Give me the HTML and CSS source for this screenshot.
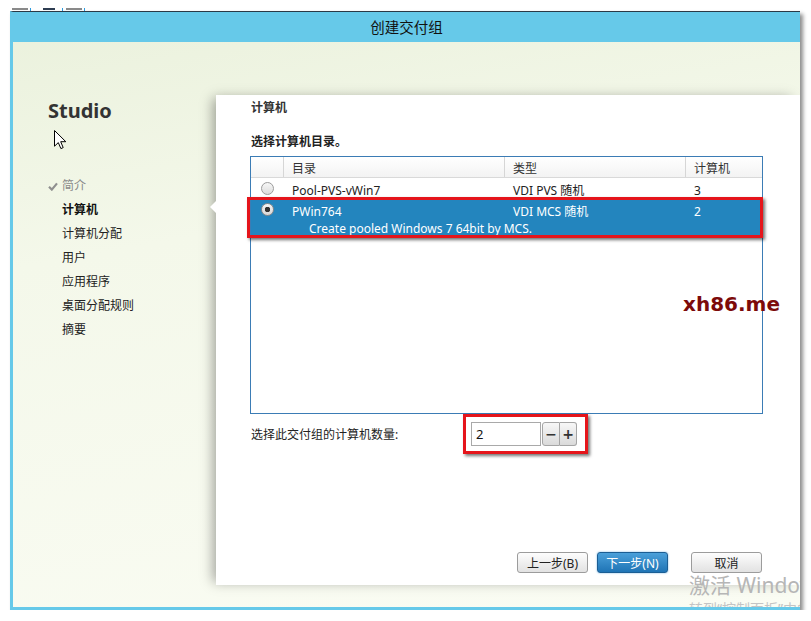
FILE: index.html
```html
<!DOCTYPE html>
<html lang="zh-CN">
<head>
    <meta charset="UTF-8">
    <title>创建交付组</title>
    <link rel="stylesheet" href="styles.css">
</head>
<body>
    <div class="peek">
        <span class="peek-bar"></span><span class="peek-tick"></span>
        <span class="peek-bar dark"></span><span class="peek-tick"></span>
        <span class="peek-bar"></span><span class="peek-tick"></span>
    </div>

    <div class="window">
        <div class="titlebar">创建交付组</div>

        <div class="wizard">
            <aside class="sidebar">
                <div class="brand">Studio</div>
                <svg class="pointer" width="13" height="20" viewBox="0 0 13 20">
                    <path d="M0.5 0.5 L0.5 16.2 L4.3 12.6 L6.9 18.6 L9.2 17.6 L6.7 11.7 L11.8 11.7 Z" fill="#fff" stroke="#000" stroke-width="1" stroke-linejoin="miter"/>
                </svg>
                <ul class="steps">
                    <li class="done">
                        <svg class="check" width="10" height="9" viewBox="0 0 10 9">
                            <path d="M1 4.8 L3.8 7.6 L9 1.4" fill="none" stroke="#8f8f8f" stroke-width="2.2"/>
                        </svg>简介
                    </li>
                    <li class="current">计算机</li>
                    <li>计算机分配</li>
                    <li>用户</li>
                    <li>应用程序</li>
                    <li>桌面分配规则</li>
                    <li>摘要</li>
                </ul>
            </aside>

            <main class="panel">
                <span class="notch"></span>
                <h2>计算机</h2>
                <p class="prompt">选择计算机目录。</p>

                <div class="catalog">
                    <div class="row catalog-head">
                        <div></div>
                        <div>目录</div>
                        <div>类型</div>
                        <div>计算机</div>
                    </div>
                    <div class="row">
                        <span class="radio"></span>
                        <div>Pool-PVS-vWin7</div>
                        <div>VDI PVS 随机</div>
                        <div>3</div>
                    </div>
                    <div class="row selected">
                        <span class="radio checked"></span>
                        <div>PWin764</div>
                        <div>VDI MCS 随机</div>
                        <div>2</div>
                        <div class="desc">Create pooled Windows 7 64bit by MCS.</div>
                    </div>
                    <div class="mark mark-row"></div>
                </div>

                <div class="count">
                    <label for="count">选择此交付组的计算机数量:</label>
                    <input type="text" id="count" value="2">
                    <div class="spin">
                        <button class="spin-btn">−</button>
                        <button class="spin-btn">+</button>
                    </div>
                    <div class="mark mark-count"></div>
                </div>

                <div class="actions">
                    <button class="btn">上一步(B)</button>
                    <button class="btn btn-primary">下一步(N)</button>
                    <button class="btn">取消</button>
                </div>
            </main>
        </div>

        <div class="brandmark">xh86.me</div>
        <div class="activate">激活 Windows<small>转到“控制面板”中的“系统”以激活 Windows。</small></div>
    </div>
</body>
</html>
```

FILE: styles.css
```css
body {
    margin: 0;
    background: #fff;
    font-family: "Noto Sans", "Noto Sans CJK SC", sans-serif;
    font-size: 12px;
    color: #222;
}

/* taskbar peek above the window */
.peek {
    height: 11px;
    display: flex;
    align-items: flex-end;
    padding-left: 12px;
}

.peek-bar {
    width: 16px;
    height: 2px;
    margin-bottom: 1px;
    background: #8a8a8a;
}

.peek-bar.dark {
    width: 12px;
    margin-left: 12px;
    background: #2e3d52;
}

.peek-tick {
    width: 1px;
    height: 3px;
    margin-left: 2px;
    background: #2a9be0;
}

.peek-bar.dark + .peek-tick {
    margin-left: 7px;
}

.peek-bar:nth-child(5) {
    margin-left: 3px;
}

.window {
    position: relative;
    margin-left: 10px;
    width: 787px;
    height: 595px;
    border-top: 1px solid #2b3a46;
    border-left: 3px solid #66c9e9;
    border-bottom: 3px solid #66c9e9;
    box-shadow: 3px 3px 4px rgba(0, 0, 0, 0.45);
    background: linear-gradient(170deg, #eaf1dc 0%, #f4f8ea 35%, #fafcf3 100%);
    overflow: hidden;
    display: flex;
    flex-direction: column;
}

.titlebar {
    height: 30px;
    line-height: 29px;
    background: #66c9e9;
    text-align: center;
    font-family: "Noto Sans CJK SC", sans-serif;
    font-size: 14.5px;
    color: #111;
}

.wizard {
    flex: 1;
    display: flex;
}

.sidebar {
    width: 203px;
    flex-shrink: 0;
    padding-left: 35px;
    box-sizing: border-box;
}

.brand {
    margin-top: 57px;
    font-size: 20px;
    font-weight: bold;
    line-height: 24px;
    color: #333;
}

.pointer {
    display: block;
    margin: 7px 0 0 6px;
}

.steps {
    list-style: none;
    margin: 24px 0 0;
    padding: 0 0 0 14px;
}

.steps li {
    height: 24px;
    line-height: 24px;
    color: #222;
}

.steps .done {
    color: #8a8a8a;
}

.steps .check {
    margin-left: -14px;
    margin-right: 4px;
    vertical-align: -1px;
}

.steps .current {
    font-weight: bold;
    color: #111;
}

.panel {
    flex: 1;
    position: relative;
    margin: 53px 0 22px;
    padding: 5px 37px 12px 34px;
    background: #fff;
    box-shadow: -6px 0 12px -3px rgba(0, 0, 0, 0.35);
    display: flex;
    flex-direction: column;
}

.notch {
    position: absolute;
    left: -6px;
    top: 106px;
    border-style: solid;
    border-width: 6px 6px 6px 0;
    border-color: transparent #fff transparent transparent;
}

.panel h2 {
    margin: 0;
    padding-left: 1px;
    font-size: 12px;
    line-height: 16px;
    font-weight: bold;
    color: #333;
}

.prompt {
    margin: 18px 0 6px;
    padding-left: 1px;
    line-height: 16px;
    font-weight: bold;
    color: #222;
}

.catalog {
    position: relative;
    height: 258px;
    box-sizing: border-box;
    border: 1px solid #3b7cb5;
    background: #fff;
}

.row {
    display: grid;
    grid-template-columns: 33px 221px 181px 1fr;
    height: 21px;
    align-items: center;
}

.row > div {
    padding: 4px 0 0 8px;
    line-height: 17px;
    white-space: nowrap;
}

.catalog-head {
    height: 20px;
    border-bottom: 1px solid #d9d9d9;
    background: linear-gradient(#fff, #f3f3f3);
    color: #333;
}

.catalog-head > div {
    height: 100%;
    box-sizing: border-box;
    line-height: 16px;
    border-right: 1px solid #d6d6d6;
}

.catalog-head > div:last-child {
    border-right: none;
}

.radio {
    justify-self: center;
    width: 13px;
    height: 13px;
    box-sizing: border-box;
    border-radius: 50%;
    border: 1px solid #9c9c9c;
    background: linear-gradient(#f7f7f7, #dcdcdc);
}

.radio.checked {
    border-color: #8a8a8a;
    background: radial-gradient(circle, #333 0 2.5px, transparent 3px), linear-gradient(#f4f4f4, #d6d6d6);
}

.row.selected {
    height: 36px;
    grid-template-rows: 19px 17px;
    align-content: start;
    align-items: start;
    padding-top: 2px;
    box-sizing: border-box;
    overflow: hidden;
    background: #2385be;
    color: #fff;
}

.row.selected > div {
    padding-top: 2px;
}

.row.selected .radio {
    margin-top: 2px;
}

.row.selected .desc {
    grid-column: 2 / -1;
    padding: 0 0 0 25px;
}

/* red annotation frames */
.mark {
    position: absolute;
    box-sizing: border-box;
    border: 3px solid #e5151b;
    box-shadow: 2px 2px 3px rgba(0, 0, 0, 0.55);
}

.mark-row {
    left: -4px;
    top: 40px;
    width: 516px;
    height: 41px;
}

.count {
    position: relative;
    display: flex;
    align-items: center;
    height: 24px;
    margin-top: 8px;
}

.count label {
    width: 221px;
    padding-left: 1px;
    box-sizing: border-box;
    color: #222;
}

.count input {
    width: 70px;
    height: 24px;
    box-sizing: border-box;
    border: 1px solid #a9a9a9;
    padding: 0 4px;
    font-family: inherit;
    font-size: 13px;
    color: #111;
}

.spin {
    display: flex;
    margin-left: 1px;
}

.spin-btn {
    width: 18px;
    height: 24px;
    padding: 0;
    border: 1px solid #a5a5a5;
    background: linear-gradient(#f7f7f7, #dadada);
    font-family: "DejaVu Sans", sans-serif;
    font-size: 14px;
    font-weight: bold;
    color: #333;
    border-radius: 3px 0 0 3px;
}

.spin-btn + .spin-btn {
    width: 17px;
    border-left: none;
    border-radius: 0 3px 3px 0;
}

.mark-count {
    left: 213px;
    top: -8px;
    width: 125px;
    height: 40px;
}

.actions {
    margin-top: auto;
    display: flex;
    justify-content: flex-end;
    gap: 9px;
    padding-right: 1px;
}

.btn {
    width: 71px;
    height: 21px;
    padding: 0;
    border: 1px solid #9c9c9c;
    border-radius: 3px;
    background: linear-gradient(#fdfdfd, #e2e2e2);
    font-family: "Noto Sans", "Noto Sans CJK SC", sans-serif;
    font-size: 12px;
    color: #222;
}

.btn-primary {
    margin-right: 14px;
    border-color: #1b5e94;
    background: linear-gradient(#4aa0da, #1f74b5);
    box-shadow: 0 0 2px #6ab0e0;
    color: #fff;
}

.brandmark {
    position: absolute;
    left: 670px;
    top: 280px;
    font-family: "DejaVu Sans", sans-serif;
    font-size: 20px;
    font-weight: bold;
    line-height: 24px;
    color: #7c0a0a;
}

.activate {
    position: absolute;
    left: 676px;
    top: 561px;
    font-family: "Noto Sans", "Noto Sans CJK SC", sans-serif;
    font-size: 21px;
    line-height: 24px;
    color: #b6b6b6;
    white-space: nowrap;
}

.activate small {
    display: block;
    margin-top: 3px;
    font-size: 14px;
    line-height: 18px;
    color: #c4c4c4;
}
```
